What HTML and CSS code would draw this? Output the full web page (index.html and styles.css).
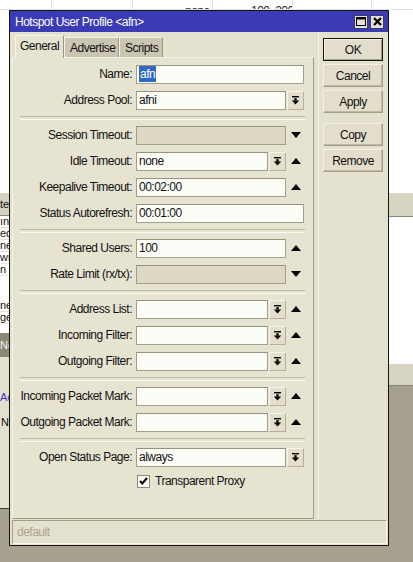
FILE: index.html
```html
<!DOCTYPE html>
<html>
<head>
<meta charset="utf-8">
<link rel="stylesheet" href="styles.css">
</head>
<body>
<div class="desktop">
  <div class="strip strip-left">
    <div class="bg-toprow"></div>
    <div class="bg-white h183"></div>
    <div class="bg-head h23"><span class="frag">te</span></div>
    <div class="bg-row"><span class="frag">ın</span></div>
    <div class="bg-row"><span class="frag">ed</span></div>
    <div class="bg-row"><span class="frag">ne</span></div>
    <div class="bg-row"><span class="frag">wr</span></div>
    <div class="bg-row"><span class="frag">n</span></div>
    <div class="bg-white h24"></div>
    <div class="bg-row"><span class="frag">ne</span></div>
    <div class="bg-row"><span class="frag">ge</span></div>
    <div class="bg-white h9"></div>
    <div class="bg-dark h24"><span class="frag">Ne</span></div>
    <div class="bg-beige h151">
      <span class="frag frag-blue">Ac</span>
      <span class="frag frag-n">N</span>
    </div>
    <div class="bg-line"></div>
  </div>

  <div class="center">
    <div class="topstrip">
      <div class="cell w43"></div>
      <div class="cell w81"></div>
      <div class="cell w80"><span class="celltext t1">none</span></div>
      <div class="cell w80"><span class="celltext t2">100..200k</span></div>
      <div class="cell w79"></div>
      <div class="cell wrest"></div>
    </div>

    <div class="window">
      <div class="titlebar">
        <span class="title">Hotspot User Profile &lt;afn&gt;</span>
        <span class="tbtn">
          <svg width="10" height="9" viewBox="0 0 10 9"><rect x="0.5" y="0.5" width="9" height="8" fill="none" stroke="#000"/><rect x="0" y="0" width="10" height="2.5" fill="#000"/></svg>
        </span>
        <span class="tbtn">
          <svg width="9" height="9" viewBox="0 0 9 9"><path d="M1 1 L8 8 M8 1 L1 8" stroke="#000" stroke-width="2.2"/></svg>
        </span>
      </div>

      <div class="wbody">
        <div class="main">
          <div class="leftpart">
            <div class="tabs">
              <div class="tab tab-active">General</div>
              <div class="tab tab-adv">Advertise</div>
              <div class="tab tab-scr">Scripts</div>
            </div>
            <div class="panel">
              <div class="row">
                <label class="lbl">Name:</label>
                <div class="field"><div class="inp"><span class="sel">afn</span></div></div>
              </div>
              <div class="row">
                <label class="lbl">Address Pool:</label>
                <div class="field"><div class="inp">afni</div><div class="dd"><svg width="9" height="9" viewBox="0 0 9 9"><rect x="1" y="0" width="7" height="1.4" fill="#000"/><rect x="3.3" y="2.2" width="2.4" height="2.6" fill="#000"/><path d="M0.8 4.6 H8.2 L4.5 8.6 Z" fill="#000"/></svg></div></div>
              </div>
              <div class="sep"></div>
              <div class="row">
                <label class="lbl">Session Timeout:</label>
                <div class="field"><div class="inp inp-dis w150"></div><div class="arr"><svg width="10" height="6" viewBox="0 0 10 6"><path d="M0 0 H10 L5 6 Z" fill="#000"/></svg></div></div>
              </div>
              <div class="row">
                <label class="lbl">Idle Timeout:</label>
                <div class="field"><div class="inp w132">none</div><div class="dd"><svg width="9" height="9" viewBox="0 0 9 9"><rect x="1" y="0" width="7" height="1.4" fill="#000"/><rect x="3.3" y="2.2" width="2.4" height="2.6" fill="#000"/><path d="M0.8 4.6 H8.2 L4.5 8.6 Z" fill="#000"/></svg></div><div class="arr"><svg width="10" height="6" viewBox="0 0 10 6"><path d="M0 6 H10 L5 0 Z" fill="#000"/></svg></div></div>
              </div>
              <div class="row">
                <label class="lbl">Keepalive Timeout:</label>
                <div class="field"><div class="inp w150">00:02:00</div><div class="arr"><svg width="10" height="6" viewBox="0 0 10 6"><path d="M0 6 H10 L5 0 Z" fill="#000"/></svg></div></div>
              </div>
              <div class="row">
                <label class="lbl">Status Autorefresh:</label>
                <div class="field"><div class="inp">00:01:00</div></div>
              </div>
              <div class="sep"></div>
              <div class="row">
                <label class="lbl">Shared Users:</label>
                <div class="field"><div class="inp w150">100</div><div class="arr"><svg width="10" height="6" viewBox="0 0 10 6"><path d="M0 6 H10 L5 0 Z" fill="#000"/></svg></div></div>
              </div>
              <div class="row">
                <label class="lbl">Rate Limit (rx/tx):</label>
                <div class="field"><div class="inp inp-dis w150"></div><div class="arr"><svg width="10" height="6" viewBox="0 0 10 6"><path d="M0 0 H10 L5 6 Z" fill="#000"/></svg></div></div>
              </div>
              <div class="sep"></div>
              <div class="row">
                <label class="lbl">Address List:</label>
                <div class="field"><div class="inp w132"></div><div class="dd"><svg width="9" height="9" viewBox="0 0 9 9"><rect x="1" y="0" width="7" height="1.4" fill="#000"/><rect x="3.3" y="2.2" width="2.4" height="2.6" fill="#000"/><path d="M0.8 4.6 H8.2 L4.5 8.6 Z" fill="#000"/></svg></div><div class="arr"><svg width="10" height="6" viewBox="0 0 10 6"><path d="M0 6 H10 L5 0 Z" fill="#000"/></svg></div></div>
              </div>
              <div class="row">
                <label class="lbl">Incoming Filter:</label>
                <div class="field"><div class="inp w132"></div><div class="dd"><svg width="9" height="9" viewBox="0 0 9 9"><rect x="1" y="0" width="7" height="1.4" fill="#000"/><rect x="3.3" y="2.2" width="2.4" height="2.6" fill="#000"/><path d="M0.8 4.6 H8.2 L4.5 8.6 Z" fill="#000"/></svg></div><div class="arr"><svg width="10" height="6" viewBox="0 0 10 6"><path d="M0 6 H10 L5 0 Z" fill="#000"/></svg></div></div>
              </div>
              <div class="row">
                <label class="lbl">Outgoing Filter:</label>
                <div class="field"><div class="inp w132"></div><div class="dd"><svg width="9" height="9" viewBox="0 0 9 9"><rect x="1" y="0" width="7" height="1.4" fill="#000"/><rect x="3.3" y="2.2" width="2.4" height="2.6" fill="#000"/><path d="M0.8 4.6 H8.2 L4.5 8.6 Z" fill="#000"/></svg></div><div class="arr"><svg width="10" height="6" viewBox="0 0 10 6"><path d="M0 6 H10 L5 0 Z" fill="#000"/></svg></div></div>
              </div>
              <div class="sep"></div>
              <div class="row">
                <label class="lbl">Incoming Packet Mark:</label>
                <div class="field"><div class="inp w132"></div><div class="dd"><svg width="9" height="9" viewBox="0 0 9 9"><rect x="1" y="0" width="7" height="1.4" fill="#000"/><rect x="3.3" y="2.2" width="2.4" height="2.6" fill="#000"/><path d="M0.8 4.6 H8.2 L4.5 8.6 Z" fill="#000"/></svg></div><div class="arr"><svg width="10" height="6" viewBox="0 0 10 6"><path d="M0 6 H10 L5 0 Z" fill="#000"/></svg></div></div>
              </div>
              <div class="row">
                <label class="lbl">Outgoing Packet Mark:</label>
                <div class="field"><div class="inp w132"></div><div class="dd"><svg width="9" height="9" viewBox="0 0 9 9"><rect x="1" y="0" width="7" height="1.4" fill="#000"/><rect x="3.3" y="2.2" width="2.4" height="2.6" fill="#000"/><path d="M0.8 4.6 H8.2 L4.5 8.6 Z" fill="#000"/></svg></div><div class="arr"><svg width="10" height="6" viewBox="0 0 10 6"><path d="M0 6 H10 L5 0 Z" fill="#000"/></svg></div></div>
              </div>
              <div class="sep"></div>
              <div class="row">
                <label class="lbl">Open Status Page:</label>
                <div class="field"><div class="inp">always</div><div class="dd"><svg width="9" height="9" viewBox="0 0 9 9"><rect x="1" y="0" width="7" height="1.4" fill="#000"/><rect x="3.3" y="2.2" width="2.4" height="2.6" fill="#000"/><path d="M0.8 4.6 H8.2 L4.5 8.6 Z" fill="#000"/></svg></div></div>
              </div>
              <div class="chkrow">
                <span class="chk"><svg width="9" height="8" viewBox="0 0 9 8"><path d="M1 4 L3.3 6.5 L8 1" fill="none" stroke="#000" stroke-width="2"/></svg></span>
                <span class="chklbl">Transparent Proxy</span>
              </div>
            </div>
          </div>
          <div class="buttons">
            <button class="btn btn-ok">OK</button>
            <button class="btn">Cancel</button>
            <button class="btn">Apply</button>
            <button class="btn btn-gap">Copy</button>
            <button class="btn">Remove</button>
          </div>
        </div>
        <div class="status">default</div>
      </div>
    </div>
  </div>

  <div class="strip strip-right">
    <div class="bg-toprow"></div>
    <div class="bg-white h183"></div>
    <div class="bg-band h24"></div>
    <div class="bg-white h147"></div>
    <div class="bg-band h22"></div>
  </div>
</div>
</body>
</html>
```

FILE: styles.css
```css
* { box-sizing: border-box; }

body {
  margin: 0;
  font-family: "Liberation Sans", Arial, sans-serif;
  font-size: 12px;
  letter-spacing: -0.5px;
  color: #111;
}

.desktop {
  display: flex;
  width: 413px;
  height: 562px;
  overflow: hidden;
  background: #a6a18e;
}

.strip {
  display: flex;
  flex-direction: column;
  overflow: hidden;
}
.strip-left { width: 9px; }
.strip-right { width: 24px; }

.bg-toprow { height: 10px; background: #fff; border-bottom: 1px solid #e2e2e2; }
.bg-white { background: #fff; }
.h183 { height: 183px; }
.h147 { height: 147px; }
.h24 { height: 24px; }
.h23 { height: 23px; }
.h22 { height: 22px; }
.h9 { height: 9px; }
.h151 { height: 151px; }

.bg-head {
  background: #d6d2c0;
  border-bottom: 1px solid #8f8b7a;
  display: flex;
  align-items: center;
}
.bg-row {
  height: 12px;
  background: #fff;
  border-bottom: 1px solid #e4e4e4;
  display: flex;
  align-items: center;
  overflow: hidden;
}
.bg-dark {
  background: #8d8876;
  color: #f4f2ea;
  display: flex;
  align-items: center;
}
.bg-beige {
  background: #e4e0cd;
  display: flex;
  flex-direction: column;
  padding-top: 35px;
  gap: 14px;
}
.bg-line { height: 1px; background: #3a3832; }
.bg-band { background: #d8d4c2; border-bottom: 1px solid #8a8676; }

.frag {
  white-space: nowrap;
  line-height: 11px;
  font-size: 11px;
  letter-spacing: 0;
}
.frag-blue { color: #3a35c8; }
.frag-n { padding-left: 1px; }

.center {
  width: 380px;
  display: flex;
  flex-direction: column;
}

.topstrip {
  height: 10px;
  background: #fff;
  display: flex;
  overflow: hidden;
  border-bottom: 1px solid #e2e2e2;
}
.cell {
  border-right: 1px solid #e0e0e0;
  height: 10px;
  overflow: hidden;
}
.w43 { width: 43px; }
.w81 { width: 81px; }
.w80 { width: 80px; }
.w79 { width: 79px; }
.wrest { flex: 1; border-right: 0; }
.celltext {
  display: block;
  white-space: nowrap;
  padding-top: 4px;
  line-height: 14px;
  color: #222;
}
.t1 { padding-left: 52px; }
.t2 { padding-left: 38px; }

/* window */
.window {
  width: 380px;
  height: 536px;
  border: 1px solid #141414;
  background: #e5e1cf;
  display: flex;
  flex-direction: column;
}

.titlebar {
  height: 21px;
  background: #3b3bb6;
  display: flex;
  align-items: center;
  padding: 0 4px 0 5px;
  gap: 2px;
}
.title {
  flex: 1;
  color: #fff;
}
.tbtn {
  width: 14px;
  height: 14px;
  background: #e2e0d8;
  border: 1px solid #3a3a5a;
  display: flex;
  align-items: center;
  justify-content: center;
}

.wbody {
  flex: 1;
  display: flex;
  flex-direction: column;
}

.main {
  height: 487px;
  display: flex;
}

.leftpart {
  width: 302px;
  margin-left: 2px;
  padding-top: 3px;
  display: flex;
  flex-direction: column;
}

.tabs {
  height: 22px;
  display: flex;
  align-items: flex-end;
  padding-left: 3px;
}
.tab {
  height: 20px;
  padding-left: 5px;
  display: flex;
  align-items: center;
  background: #cbc6b1;
  border-top: 1px solid #f4f2ea;
  border-left: 1px solid #f4f2ea;
  border-right: 1px solid #9a957f;
  white-space: nowrap;
}
.tab-active {
  height: 23px;
  margin-bottom: -1px;
  background: #e7e3d1;
  padding-left: 4px;
  padding-bottom: 3px;
  width: 49px;
  position: relative;
  z-index: 1;
}
.tab-adv { width: 55px; }
.tab-scr { width: 44px; }

.panel {
  height: 462px;
  background: #e7e3d1;
  border-top: 1px solid #f4f2ea;
  border-left: 1px solid #f4f2ea;
  border-right: 1px solid #a09b86;
  border-bottom: 1px solid #a09b86;
  padding-top: 3px;
  display: flex;
  flex-direction: column;
}

.row {
  height: 26px;
  display: flex;
  align-items: center;
}
.lbl {
  width: 119px;
  text-align: right;
  margin-right: 4px;
  white-space: nowrap;
}
.field {
  width: 168px;
  display: flex;
  align-items: center;
}
.inp {
  flex: 1;
  height: 19px;
  background: #fdfdf8;
  border: 1px solid #a39e89;
  border-top-color: #98937e;
  padding-left: 2px;
  display: flex;
  align-items: center;
  white-space: nowrap;
}
.w150 { flex: 0 0 150px; }
.w132 { flex: 0 0 132px; }
.inp-dis { background: #dcd8c4; }
.sel {
  background: #3168c4;
  color: #fff;
  padding: 0 1px;
  line-height: 16px;
}
.dd {
  width: 17px;
  height: 19px;
  margin-left: 1px;
  background: #e3dfcc;
  border: 1px solid #b5b09b;
  border-top-color: #f6f4ec;
  border-left-color: #f6f4ec;
  display: flex;
  align-items: center;
  justify-content: center;
}
.arr {
  width: 18px;
  display: flex;
  justify-content: center;
  padding-left: 1px;
}

.sep {
  height: 9px;
  display: flex;
  align-items: center;
  padding: 0 8px 0 7px;
}
.sep::before {
  content: "";
  flex: 1;
  height: 2px;
  border-top: 1px solid #bdb8a3;
  border-bottom: 1px solid #faf8f0;
}

.chkrow {
  height: 22px;
  display: flex;
  align-items: center;
  padding-left: 124px;
  gap: 5px;
}
.chk {
  width: 13px;
  height: 13px;
  background: #fdfdf8;
  border: 1px solid #8e8975;
  display: flex;
  align-items: center;
  justify-content: center;
}

.buttons {
  flex: 1;
  margin-left: 4px;
  border-left: 1px solid #f4f2ea;
  padding: 6px 0 0 4px;
  display: flex;
  flex-direction: column;
  gap: 3px;
}
.btn {
  width: 60px;
  height: 23px;
  font-family: inherit;
  font-size: 12px;
  letter-spacing: -0.5px;
  color: #111;
  background: #e2decb;
  border: 1px solid #a49f8a;
  border-top-color: #f2f0e6;
  border-left-color: #f2f0e6;
  box-shadow: inset -1px -1px 0 #bdb8a3;
  padding: 0;
}
.btn-ok {
  border: 1px solid #141414;
  box-shadow: inset 1px 1px 0 #f2f0e6, inset -1px -1px 0 #a49f8a;
}
.btn-gap { margin-top: 7px; }

.status {
  height: 24px;
  margin: 1px 1px 1px 2px;
  border: 1px solid #f6f4ec;
  border-top-color: #a39e89;
  border-left-color: #a39e89;
  color: #aaa590;
  padding-left: 4px;
  display: flex;
  align-items: center;
}
```
